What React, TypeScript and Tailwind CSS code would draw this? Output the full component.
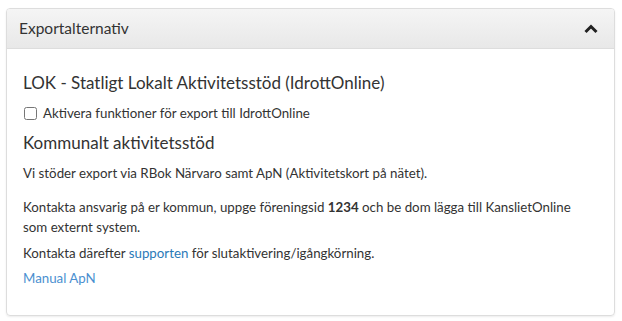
import React, { useState } from 'react';

const ChevronUp: React.FC = () => (
  <svg width="14" height="10" viewBox="0 0 14 10" className="block">
    <path d="M1.5 8 L7 2.5 L12.5 8" fill="none" stroke="#222" strokeWidth="3" strokeLinecap="butt" strokeLinejoin="miter" />
  </svg>
);

export default function App() {
  const [open, setOpen] = useState(true);
  const [checked, setChecked] = useState(false);

  return (
    <div
      className="w-[622px] h-[321px] bg-white pt-[8px] pl-[6px] pr-[7px]"
      style={{ fontFamily: 'Lato, "Open Sans", sans-serif' }}
    >
      <div className="border border-[#dddddd] rounded-[4px] shadow-[0_1px_2px_rgba(0,0,0,0.08)] h-[308px] flex flex-col overflow-hidden">
        {/* Header */}
        <div className="h-[40px] shrink-0 flex items-center pl-[12px] pr-[16px] bg-gradient-to-b from-[#f5f5f5] to-[#e8e8e8] border-b border-[#dddddd]">
          <span className="text-[15.5px] text-[#333333]">Exportalternativ</span>
          <button onClick={() => setOpen(!open)} className="ml-auto">
            <ChevronUp />
          </button>
        </div>

        {/* Body */}
        {open && (
          <div className="flex-1 px-[16px] pt-[21px] text-[#333333] text-[13.3px]">
            <h3 className="text-[17px] leading-[26px]">LOK - Statligt Lokalt Aktivitetsstöd (IdrottOnline)</h3>
            <label className="flex items-center gap-[6px] mt-[7px] leading-[20px]">
              <input
                type="checkbox"
                checked={checked}
                onChange={() => setChecked(!checked)}
                className="w-[13px] h-[13px] m-0 ml-[1px]"
              />
              Aktivera funktioner för export till IdrottOnline
            </label>
            <h3 className="text-[17px] leading-[26px] mt-[7px]">Kommunalt aktivitetsstöd</h3>
            <p className="leading-[20px] mt-[7px]">
              Vi stöder export via RBok Närvaro samt ApN (Aktivitetskort på nätet).
            </p>
            <div className="mt-[14px] leading-[20px] pr-[26px]">
              <p>
                Kontakta ansvarig på er kommun, uppge föreningsid <b>1234</b> och be dom lägga till KanslietOnline
                som externt system.
              </p>
              <p className="mt-[6px]">
                Kontakta därefter <a className="text-[#2a7ab8]">supporten</a> för slutaktivering/igångkörning.
              </p>
              <p className="mt-[5px]">
                <a className="text-[#4a8fd0]">Manual ApN</a>
              </p>
            </div>
          </div>
        )}
      </div>
    </div>
  );
}
